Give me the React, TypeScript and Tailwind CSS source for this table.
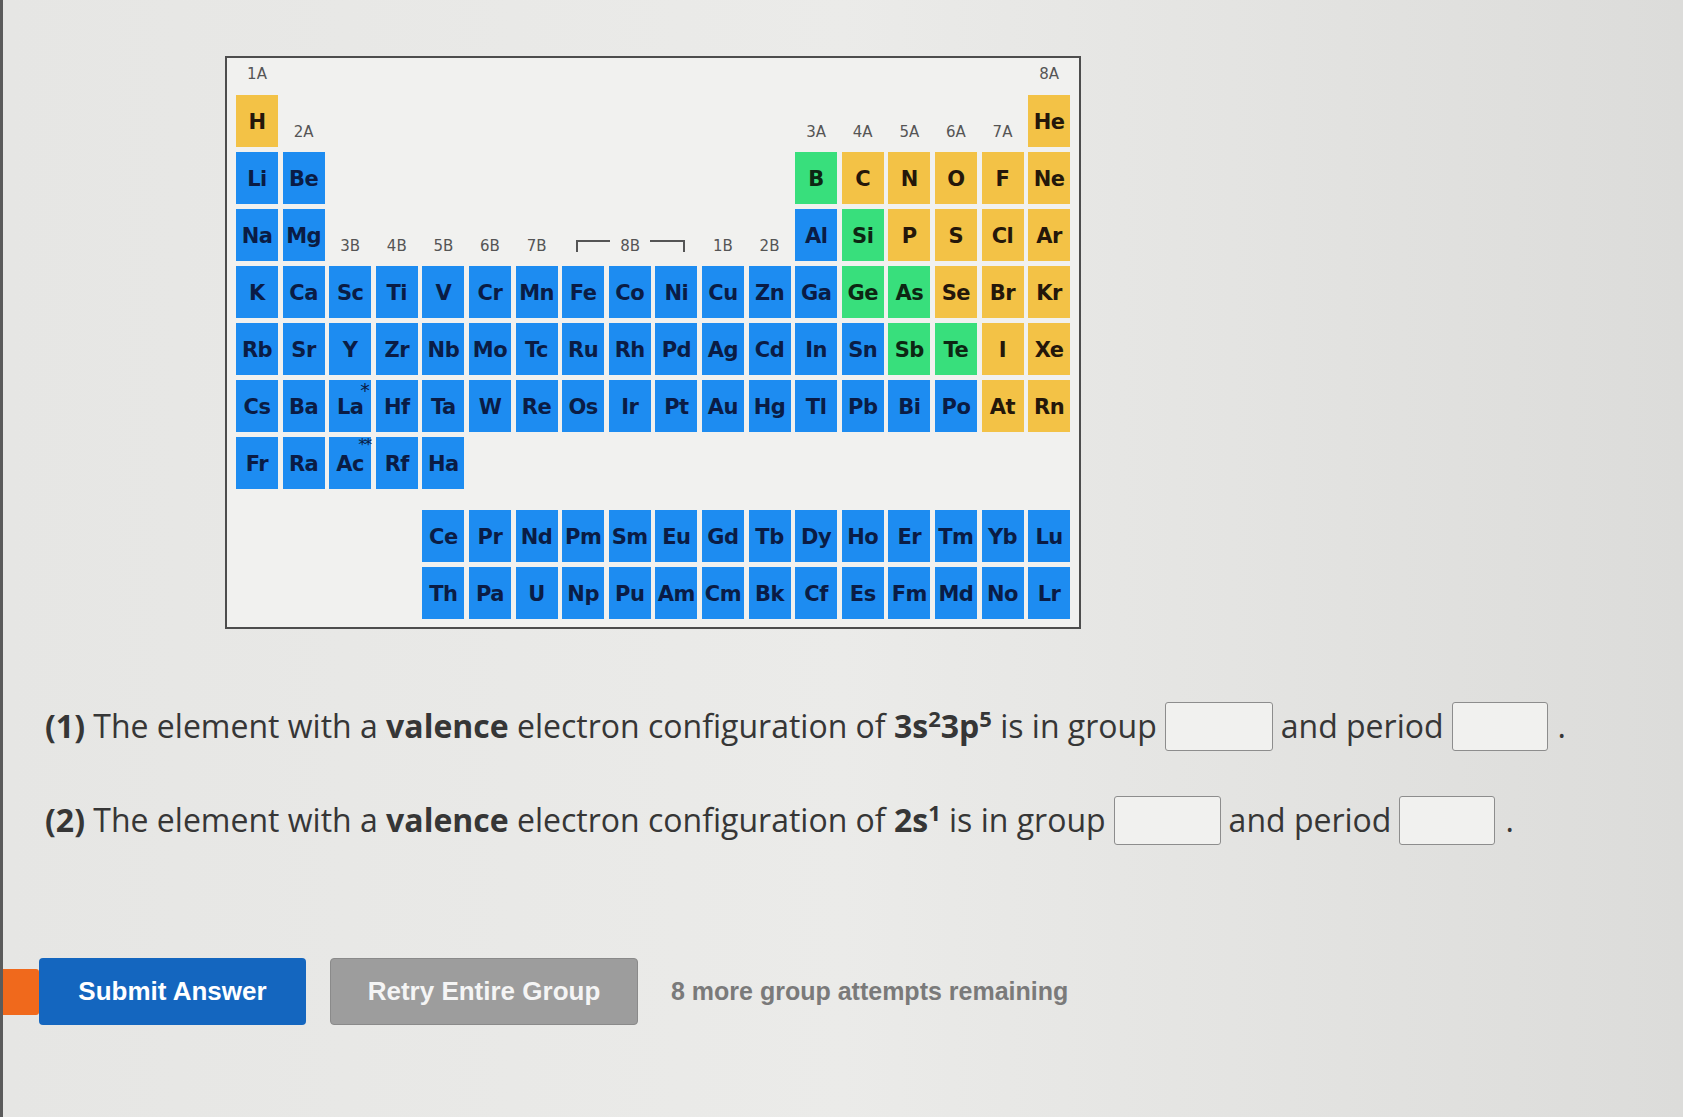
import React from "react";

type Item = string | null;

const yellow = new Set(["H", "He", "C", "N", "O", "F", "Ne", "P", "S", "Cl", "Ar", "Se", "Br", "Kr", "I", "Xe", "At", "Rn"]);
const green = new Set(["B", "Si", "Ge", "As", "Sb", "Te"]);

const e = (n: number): Item[] => Array(n).fill(null);

// "#" prefix marks a group label, "~8B" the bracket over the three 8B columns
const rows: Item[][] = [
  ["#1A", ...e(16), "#8A"],
  ["H", "#2A", ...e(10), "#3A", "#4A", "#5A", "#6A", "#7A", "He"],
  ["Li", "Be", ...e(10), "B", "C", "N", "O", "F", "Ne"],
  ["Na", "Mg", "#3B", "#4B", "#5B", "#6B", "#7B", "~8B", "#1B", "#2B", "Al", "Si", "P", "S", "Cl", "Ar"],
  ["K", "Ca", "Sc", "Ti", "V", "Cr", "Mn", "Fe", "Co", "Ni", "Cu", "Zn", "Ga", "Ge", "As", "Se", "Br", "Kr"],
  ["Rb", "Sr", "Y", "Zr", "Nb", "Mo", "Tc", "Ru", "Rh", "Pd", "Ag", "Cd", "In", "Sn", "Sb", "Te", "I", "Xe"],
  ["Cs", "Ba", "La", "Hf", "Ta", "W", "Re", "Os", "Ir", "Pt", "Au", "Hg", "Tl", "Pb", "Bi", "Po", "At", "Rn"],
  ["Fr", "Ra", "Ac", "Rf", "Ha", ...e(13)],
];

const fBlock: Item[][] = [
  [...e(4), "Ce", "Pr", "Nd", "Pm", "Sm", "Eu", "Gd", "Tb", "Dy", "Ho", "Er", "Tm", "Yb", "Lu"],
  [...e(4), "Th", "Pa", "U", "Np", "Pu", "Am", "Cm", "Bk", "Cf", "Es", "Fm", "Md", "No", "Lr"],
];

function Element({ sym }: { sym: string }) {
  const tone = yellow.has(sym)
    ? "bg-[#f3c246] text-[#24170a]"
    : green.has(sym)
      ? "bg-[#38df7c] text-[#0d2613]"
      : "bg-[#1d8cf1] text-[#0a1c45]";
  return (
    <div
      className={`relative flex h-[52px] items-center justify-center pt-[3px] text-[21px] font-bold tracking-[-0.5px] ${tone}`}
      style={{ fontFamily: '"DejaVu Sans", sans-serif' }}
    >
      {sym}
      {sym === "La" && <span className="absolute right-[2px] top-[1px] text-[19px] font-normal leading-none">*</span>}
      {sym === "Ac" && <span className="absolute right-[1px] top-[0px] text-[16px] font-normal leading-none tracking-[-2px]">**</span>}
    </div>
  );
}

function Label({ text, top }: { text: string; top?: boolean }) {
  return (
    <div
      className={`flex justify-center text-[15px] leading-[18px] text-[#555] ${top ? "items-center" : "items-end pb-[6px]"}`}
      style={{ fontFamily: '"DejaVu Sans", sans-serif' }}
    >
      {text}
    </div>
  );
}

function Bracket() {
  return (
    <div
      className="col-span-3 flex items-end pb-[6px] pl-[14px] text-[15px] leading-[18px] text-[#555]"
      style={{ fontFamily: '"DejaVu Sans", sans-serif' }}
    >
      <div className="flex items-start gap-[10px]">
        <div className="mt-[3px] h-[12px] w-[34px] border-l-2 border-t-2 border-[#555]" />
        <span>8B</span>
        <div className="mt-[3px] h-[12px] w-[35px] border-r-2 border-t-2 border-[#555]" />
      </div>
    </div>
  );
}

function renderRow(row: Item[], r: number) {
  return row.map((it, i) => {
    const key = `${r}-${i}`;
    if (it === null) return <div key={key} />;
    if (it === "~8B") return <Bracket key={key} />;
    if (it.startsWith("#")) return <Label key={key} text={it.slice(1)} top={r === 0} />;
    return <Element key={key} sym={it} />;
  });
}

function AnswerBox({ w }: { w: string }) {
  return <span className={`mx-[8px] inline-block h-[49px] rounded-[3px] border border-[#8d8d8d] bg-[#f1f1ef] align-middle ${w}`} />;
}

export default function App() {
  return (
    <div className="min-h-screen w-full overflow-hidden border-l-[3px] border-[#5b5b5b] bg-linear-to-r from-[#e6e6e4] via-[#ebebe9] to-[#dcdcda]">
      <div className="pl-[222px] pt-[56px]">
        <div className="w-[856px] border-2 border-[#4d4d4d] bg-[#f1f1ef] pb-[8px] pl-[9px]">
          <div className="grid grid-cols-[repeat(18,42px)] grid-rows-[32px_repeat(7,52px)] gap-x-[4.6px] gap-y-[5px]">
            {rows.map((row, r) => renderRow(row, r))}
          </div>
          <div className="mt-[21px] grid grid-cols-[repeat(18,42px)] gap-x-[4.6px] gap-y-[5px]">
            {fBlock.map((row, r) => renderRow(row, r + 10))}
          </div>
        </div>
      </div>

      <div
        className="pl-[42px] pt-[72px] text-[32px] text-[#363636]"
        style={{ fontFamily: '"Open Sans", sans-serif' }}
      >
        <div className="flex h-[50px] items-center whitespace-nowrap">
          <span>
            <b className="font-bold">(1)</b> The element with a <b className="font-bold">valence</b> electron configuration of{" "}
            <b className="font-bold">
              3s<sup className="text-[22px]">2</sup>3p<sup className="text-[22px]">5</sup>
            </b>{" "}
            is in group
          </span>
          <AnswerBox w="w-[108px]" />
          <span>and period</span>
          <AnswerBox w="w-[96px]" />
          <span className="ml-[2px]">.</span>
        </div>
        <div className="mt-[44px] flex h-[50px] items-center whitespace-nowrap">
          <span>
            <b className="font-bold">(2)</b> The element with a <b className="font-bold">valence</b> electron configuration of{" "}
            <b className="font-bold">
              2s<sup className="text-[22px]">1</sup>
            </b>{" "}
            is in group
          </span>
          <AnswerBox w="w-[107px]" />
          <span>and period</span>
          <AnswerBox w="w-[96px]" />
          <span className="ml-[2px]">.</span>
        </div>
      </div>

      <div
        className="mt-[113px] flex items-center"
        style={{ fontFamily: '"Liberation Sans", Arial, sans-serif' }}
      >
        <div className="h-[46px] w-[36px] rounded-r-[3px] bg-[#f0691c]" />
        <button className="flex h-[67px] w-[267px] items-center justify-center rounded-[4px] bg-[#1466bf] text-[26px] font-bold text-white">
          Submit Answer
        </button>
        <button className="ml-[24px] flex h-[67px] w-[308px] items-center justify-center rounded-[4px] border border-[#8a8a8a] bg-[#9d9d9d] text-[26px] font-bold text-[#f5f5f5]">
          Retry Entire Group
        </button>
        <span className="ml-[33px] text-[25px] font-bold text-[#7a7a7a]">8 more group attempts remaining</span>
      </div>
    </div>
  );
}
